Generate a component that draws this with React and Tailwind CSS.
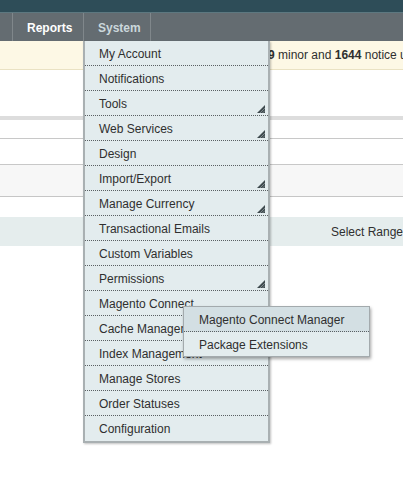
import React from 'react'

const items = [
  { label: 'My Account' },
  { label: 'Notifications' },
  { label: 'Tools', sub: true },
  { label: 'Web Services', sub: true },
  { label: 'Design' },
  { label: 'Import/Export', sub: true },
  { label: 'Manage Currency', sub: true },
  { label: 'Transactional Emails' },
  { label: 'Custom Variables' },
  { label: 'Permissions', sub: true },
  { label: 'Magento Connect', open: true },
  { label: 'Cache Management' },
  { label: 'Index Management' },
  { label: 'Manage Stores' },
  { label: 'Order Statuses' },
  { label: 'Configuration' },
]

function SubArrow() {
  return (
    <svg width="8" height="8" viewBox="0 0 8 8" className="absolute right-[3px] bottom-[2px]">
      <polygon points="8,0 8,8 0,8" fill="#3f4a4e" />
      <line x1="8" y1="3" x2="3" y2="8" stroke="#8a979b" strokeWidth="0.8" />
      <line x1="8" y1="5.5" x2="5.5" y2="8" stroke="#8a979b" strokeWidth="0.8" />
    </svg>
  )
}

function Flyout() {
  return (
    <div className="absolute left-[98px] top-[15px] w-[187px] bg-[#e3ecee] border border-[#a3aaad] shadow-[1px_2px_3px_rgba(0,0,0,0.35)] z-20">
      <div className="h-[25px] flex items-center pl-[15px] pt-[1px] bg-[#d3dfe3] border-b border-dotted border-[#5a6063]">
        Magento Connect Manager
      </div>
      <div className="h-[24px] flex items-center pl-[15px] pt-[1px]">Package Extensions</div>
    </div>
  )
}

function SystemMenu() {
  return (
    <div className="absolute left-[83px] top-0 w-[187px] bg-[#e3ecee] border-l-2 border-r-2 border-b-2 border-[#a9b0b2] shadow-[1px_1px_2px_rgba(0,0,0,0.25)] z-10">
      {items.map((it, i) => (
        <div
          key={it.label}
          className={`relative h-[25px] flex items-center pl-[14px] pt-[1px] whitespace-nowrap ${
            i < items.length - 1 ? 'border-b border-dotted border-[#5a6063]' : ''
          }`}
        >
          {it.label}
          {it.sub && <SubArrow />}
          {it.open && <Flyout />}
        </div>
      ))}
    </div>
  )
}

export default function App() {
  return (
    <div className="w-[403px] h-[483px] overflow-hidden bg-white text-[12px] text-[#2f2f2f] font-['Liberation_Sans',Arial,sans-serif]">
      {/* header */}
      <div className="h-[12px] bg-[#2e4d58]" />
      <div className="h-[1px] bg-[#5d7880]" />
      <div className="h-[28px] bg-[#646c71] flex font-bold">
        <div className="w-[12px]" />
        <div className="w-[71px] border-l border-[#80878b] flex items-center pl-[14px] pt-[1px] text-white">Reports</div>
        <div className="w-[68px] border-l border-r border-[#80878b] flex items-center pl-[14px] pt-[1px] text-[#cbd7db]">System</div>
      </div>

      {/* content */}
      <div className="relative">
        <div className="h-[29px] bg-[#fdf8e5] border-b border-[#eae2c3] flex items-center pl-[268px] whitespace-nowrap overflow-hidden">
          <span><b>9</b> minor and <b>1644</b> notice unread message(s)</span>
        </div>
        <div className="h-[46px]" />
        <div className="h-[4px] bg-[#dddddd]" />
        <div className="h-[19px] border-b border-[#c8c8c8]" />
        <div className="h-[26px] border-b border-[#c8c8c8]" />
        <div className="h-[32px] bg-[#f7f7f7] border-b border-[#c6c6c6]" />
        <div className="h-[20px]" />
        <div className="h-[29px] bg-[#e5eded] flex items-center pl-[331px] whitespace-nowrap">Select Range</div>

        <SystemMenu />
      </div>
    </div>
  )
}
